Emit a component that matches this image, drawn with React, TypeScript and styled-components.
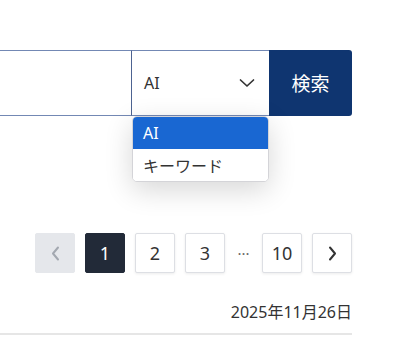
import React, { useState } from 'react';
import styled, { createGlobalStyle } from 'styled-components';

const GlobalStyle = createGlobalStyle`
  body {
    margin: 0;
    background: #ffffff;
    font-family: "Noto Sans", "Noto Sans CJK JP", sans-serif;
    color: #333333;
  }
`;

const Page = styled.div`
  width: 372px;
  margin-left: -20px;
`;

const SearchRow = styled.div`
  display: flex;
  margin-top: 50px;
  height: 66px;
`;

const KeywordInput = styled.input`
  flex: 1;
  min-width: 0;
  border: 1px solid #7388b4;
  border-right: none;
  padding: 0 12px;
  font-size: 16px;
  font-family: inherit;
  outline: none;
`;

const SelectWrap = styled.div`
  position: relative;
  width: 138px;
  display: flex;
`;

const SelectBox = styled.button`
  flex: 1;
  display: flex;
  align-items: center;
  justify-content: space-between;
  padding: 0 14px 0 12px;
  background: #ffffff;
  border: 1px solid #7388b4;
  border-left-color: #4d6391;
  border-right: none;
  font-family: inherit;
  font-size: 16px;
  color: #333333;
  cursor: pointer;
`;

const SearchButton = styled.button`
  width: 83px;
  background: #0f3570;
  color: #ffffff;
  border: none;
  border-radius: 0 3px 3px 0;
  font-family: inherit;
  font-size: 19px;
  cursor: pointer;
`;

const Menu = styled.ul`
  position: absolute;
  top: 100%;
  left: 1px;
  width: 135px;
  margin: 0;
  padding: 0;
  list-style: none;
  background: #ffffff;
  border: 1px solid #d4d4d8;
  border-radius: 5px;
  overflow: hidden;
  box-shadow: 0 8px 28px rgba(0, 0, 0, 0.16);
  z-index: 2;
`;

const MenuItem = styled.li<{ $active?: boolean }>`
  height: 32px;
  display: flex;
  align-items: center;
  padding: 0 10px;
  font-size: 16px;
  background: ${({ $active }) => ($active ? '#1967d2' : '#ffffff')};
  color: ${({ $active }) => ($active ? '#ffffff' : '#333333')};
`;

const Pager = styled.nav`
  display: flex;
  justify-content: flex-end;
  align-items: center;
  gap: 10px;
  margin-top: 117px;
`;

const PageButton = styled.button<{ $active?: boolean; $disabled?: boolean }>`
  width: 40px;
  height: 40px;
  display: flex;
  align-items: center;
  justify-content: center;
  border-radius: 2px;
  font-family: inherit;
  font-size: 18px;
  cursor: pointer;
  border: 1px solid
    ${({ $active, $disabled }) => ($active ? '#222a38' : $disabled ? '#e5e7eb' : '#dddfe4')};
  background: ${({ $active, $disabled }) =>
    $active ? '#222a38' : $disabled ? '#e5e7eb' : '#ffffff'};
  color: ${({ $active, $disabled }) => ($active ? '#ffffff' : $disabled ? '#a3a8b0' : '#333333')};
  box-shadow: ${({ $active, $disabled }) =>
    $active || $disabled ? 'none' : '0 1px 3px rgba(0, 0, 0, 0.08)'};
`;

const Ellipsis = styled.span`
  width: 17px;
  text-align: center;
  color: #666666;
  font-size: 15px;
`;

const DateText = styled.div`
  text-align: right;
  margin-top: 28px;
  font-size: 16px;
  line-height: 22px;
  color: #333333;
`;

const Divider = styled.hr`
  margin: 10px 0 0;
  border: none;
  border-top: 2px solid #e6e6e6;
`;

const Chevron = ({ dir }: { dir: 'down' | 'left' | 'right' }) => {
  if (dir === 'down') {
    return (
      <svg width="16" height="10" viewBox="0 0 16 10">
        <path d="M1.5 2 L8 8 L14.5 2" fill="none" stroke="#333" strokeWidth="1.7" strokeLinecap="round" strokeLinejoin="round" />
      </svg>
    );
  }
  const d = dir === 'left' ? 'M7 1.5 L2 7.5 L7 13.5' : 'M2 1.5 L7 7.5 L2 13.5';
  return (
    <svg width="9" height="15" viewBox="0 0 9 15">
      <path d={d} fill="none" stroke="currentColor" strokeWidth="2" strokeLinecap="round" strokeLinejoin="round" />
    </svg>
  );
};

const options = ['AI', 'キーワード'];

const App: React.FC = () => {
  const [mode] = useState('AI');
  const [page] = useState(1);

  return (
    <Page>
      <GlobalStyle />
      <SearchRow>
        <KeywordInput type="text" />
        <SelectWrap>
          <SelectBox type="button">
            <span>{mode}</span>
            <Chevron dir="down" />
          </SelectBox>
          <Menu>
            {options.map((o) => (
              <MenuItem key={o} $active={o === mode}>
                {o}
              </MenuItem>
            ))}
          </Menu>
        </SelectWrap>
        <SearchButton type="button">検索</SearchButton>
      </SearchRow>

      <Pager>
        <PageButton $disabled>
          <Chevron dir="left" />
        </PageButton>
        {[1, 2, 3].map((n) => (
          <PageButton key={n} $active={n === page}>
            {n}
          </PageButton>
        ))}
        <Ellipsis>···</Ellipsis>
        <PageButton>10</PageButton>
        <PageButton>
          <Chevron dir="right" />
        </PageButton>
      </Pager>

      <DateText>2025年11月26日</DateText>
      <Divider />
    </Page>
  );
};

export default App;
